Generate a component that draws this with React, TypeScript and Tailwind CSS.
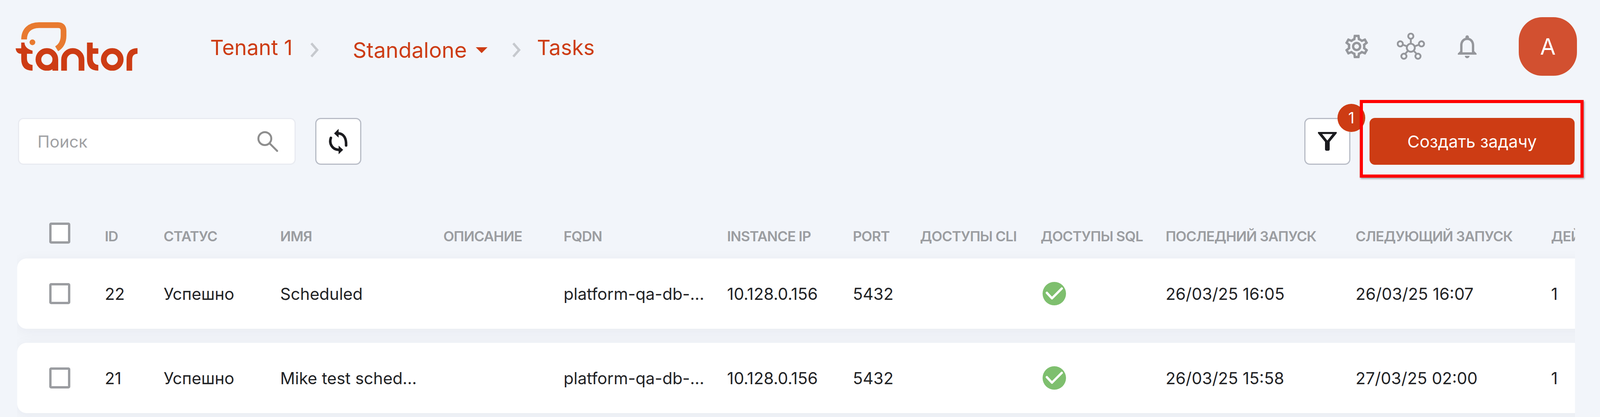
import { MdOutlineNotifications, MdOutlineSettings } from 'react-icons/md'

const font = { fontFamily: 'Inter, "Liberation Sans", sans-serif' }

const headers = [
  'ID',
  'СТАТУС',
  'ИМЯ',
  'ОПИСАНИЕ',
  'FQDN',
  'INSTANCE IP',
  'PORT',
  'ДОСТУПЫ CLI',
  'ДОСТУПЫ SQL',
  'ПОСЛЕДНИЙ ЗАПУСК',
  'СЛЕДУЮЩИЙ ЗАПУСК',
  'ДЕЙСТВИЯ',
]

const tasks = [
  { id: '22', name: 'Scheduled', last: '26/03/25 16:05', next: '26/03/25 16:07' },
  { id: '21', name: 'Mike test sched...', last: '26/03/25 15:58', next: '27/03/25 02:00' },
]

// columns are proportional, the table overflows its clip on the right like the real one
const columns = 'grid w-[105.46%] grid-cols-[241fr_162fr_321fr_449fr_331fr_450fr_346fr_185fr_332fr_344fr_523fr_538fr_300fr]'

function Logo() {
  return (
    <svg width="312" height="124" viewBox="120 108 936 372" className="shrink-0">
      <g fill="#cd3c14">
        <path d="M163 264H188Q190 310 250 326V350H207V385Q207 432 250 436V480Q163 480 163 390V350Q125 350 120 308H163Z" />
        <rect x="403" y="394" width="44" height="86" />
        <path d="M668 264H712V308H755V350H712V385Q712 432 755 436V480Q668 480 668 390Z" />
        <path d="M972 480V395Q972 308 1057 307V350Q1015 350 1015 395V480Z" />
      </g>
      <g fill="none" stroke="#cd3c14" strokeWidth="44">
        <circle cx="360" cy="394" r="65" />
        <path d="M492 480V396A67 67 0 0 1 626 396V480" />
        <circle cx="862" cy="394" r="65" />
      </g>
      <path d="M488 210Q488 280 435 312" fill="none" stroke="#f2f5fa" strokeWidth="56" />
      <path d="M185 240C185 170 230 130 300 130H445Q488 130 488 175V210Q488 280 435 312" fill="none" stroke="#e87a30" strokeWidth="44" />
      <circle cx="249" cy="262" r="22" fill="#e87a30" />
    </svg>
  )
}

function Chevron() {
  return (
    <svg width="24" height="38" viewBox="0 0 24 38" fill="none" stroke="#c6c9ce" strokeWidth="6" className="shrink-0">
      <path d="M4 2L19 19L4 36" />
    </svg>
  )
}

function Network() {
  return (
    <svg width="72" height="70" viewBox="0 0 216 210" fill="none" stroke="#95979c" strokeWidth="14" className="shrink-0">
      <circle cx="107" cy="115" r="31" />
      <circle cx="107" cy="26" r="20" />
      <circle cx="26" cy="85" r="20" />
      <circle cx="189" cy="85" r="20" />
      <circle cx="54" cy="180" r="20" />
      <circle cx="162" cy="180" r="20" />
      <path d="M107 46V84M46 92L78 104M169 92L136 104M64 162L85 138M152 162L129 138" />
    </svg>
  )
}

function Checkbox() {
  return <div className="w-[54px] h-[54px] border-[6px] border-[#9b9da1] rounded-[5px] bg-white" />
}

function CheckCircle() {
  return (
    <svg width="60" height="60" viewBox="0 0 60 60">
      <circle cx="30" cy="30" r="30" fill="#7ebf6e" />
      <path d="M11 28L24 42L49 17" fill="none" stroke="#fff" strokeWidth="6" strokeLinecap="round" strokeLinejoin="round" />
    </svg>
  )
}

export default function App() {
  return (
    <div style={font} className="w-full h-screen overflow-hidden bg-[#f2f5fa]">
      <header className="flex items-center h-[150px] pt-0 mt-[44px] pl-[40px] pr-[59px]">
        <Logo />
        <nav className="flex items-center ml-[186px] mt-[18px] text-[#cd3c14] text-[54px] leading-none">
          <span className="-mt-[12px]">Tenant 1</span>
          <span className="ml-[44px]"><Chevron /></span>
          <span className="ml-[86px] flex items-center text-[55px]">
            Standalone
            <span className="ml-[23px] w-0 h-0 border-x-[15px] border-x-transparent border-t-[15px] border-t-[#cd3c14]" />
          </span>
          <span className="ml-[62px]"><Chevron /></span>
          <span className="ml-[40px] -mt-[12px]">Tasks</span>
        </nav>
        <div className="ml-auto flex items-center text-[#95979c]">
          <MdOutlineSettings size={72} className="-mx-[6px]" />
          <span className="ml-[73px]"><Network /></span>
          <MdOutlineNotifications size={72} className="ml-[72px] -mr-[12px]" />
          <div className="ml-[108px] w-[149px] h-[150px] rounded-[60px] bg-[#d25030] flex items-center justify-center text-white text-[58px]">A</div>
        </div>
      </header>

      <section className="flex items-center mt-[108px] h-[120px] pl-[46px] pr-[65px]">
        <div className="w-[711px] h-full flex items-center justify-between bg-white rounded-[14px] border-[3px] border-[#e9ebf1] pl-[47px] pr-[42px]">
          <span className="text-[#a0a1a4] text-[42px]">Поиск</span>
          <svg width="53" height="53" viewBox="0 0 53 53" fill="none" stroke="#8e8e8e" strokeWidth="5" strokeLinecap="round">
            <circle cx="19" cy="19" r="16.5" />
            <path d="M31 31L50.5 50.5" />
          </svg>
        </div>
        <button className="ml-[50px] w-[118px] h-full flex items-center justify-center bg-white rounded-[14px] border-[3px] border-[#b8bcc6]">
          <svg width="48" height="65" viewBox="5 2 145 196" fill="none" stroke="#1b1b1f" strokeWidth="20" strokeLinecap="round">
            <path d="M80 37C120 40 140 75 138 130" />
            <path d="M20 72C5 115 30 162 80 164" />
            <path d="M80 2L45 37L80 70Z" fill="#1b1b1f" stroke="none" />
            <path d="M80 132L115 164L80 198Z" fill="#1b1b1f" stroke="none" />
          </svg>
        </button>
        <div className="ml-auto relative">
          <button className="w-[118px] h-[120px] flex items-center justify-center bg-white rounded-[14px] border-[3px] border-[#b8bcc6]">
            <svg width="48" height="48" viewBox="0 0 144 144" fill="#1b1b1f" fillRule="evenodd">
              <path d="M0 0H144V10L90 76V132Q90 144 78 144H66Q54 144 54 132V76L0 10ZM32 16L72 66L112 16Z" />
            </svg>
          </button>
          <span className="absolute -top-[36px] -right-[38px] w-[71px] h-[72px] rounded-full bg-[#cd3c14] flex items-center justify-center text-white text-[39px]">1</span>
        </div>
        <div className="ml-[49px] relative">
          <button className="w-[525px] h-[120px] rounded-[14px] bg-[#cd3c14] text-white text-[43px] flex items-center justify-center">Создать задачу</button>
          <div className="absolute -left-[25px] -top-[46px] -right-[23px] -bottom-[33px] border-[8px] border-[#ff0000] shadow-[2px_3px_4px_rgba(0,0,0,0.35)]" />
        </div>
      </section>

      <section className="mt-[118px] ml-[44px] mr-[64px] overflow-hidden pb-[40px]">
        <div className={`${columns} items-center h-[122px] text-[#9b9da1] text-[36px] font-semibold tracking-[-1px] whitespace-nowrap`}>
          <div className="pl-[82px] -mt-[8px]"><Checkbox /></div>
          {headers.map((h) => (
            <div key={h} className="mt-[8px]">{h}</div>
          ))}
        </div>
        {tasks.map((t) => (
          <div key={t.id} className={`${columns} items-center h-[180px] mb-[36px] bg-white rounded-l-[24px] shadow-[0_6px_36px_rgba(30,40,60,0.05)] text-[#222326] text-[42px] whitespace-nowrap`}>
            <div className="pl-[82px]"><Checkbox /></div>
            <div>{t.id}</div>
            <div>Успешно</div>
            <div>{t.name}</div>
            <div />
            <div>platform-qa-db-...</div>
            <div>10.128.0.156</div>
            <div>5432</div>
            <div />
            <div className="pl-[5px]"><CheckCircle /></div>
            <div>{t.last}</div>
            <div>{t.next}</div>
            <div>1</div>
          </div>
        ))}
      </section>
    </div>
  )
}
